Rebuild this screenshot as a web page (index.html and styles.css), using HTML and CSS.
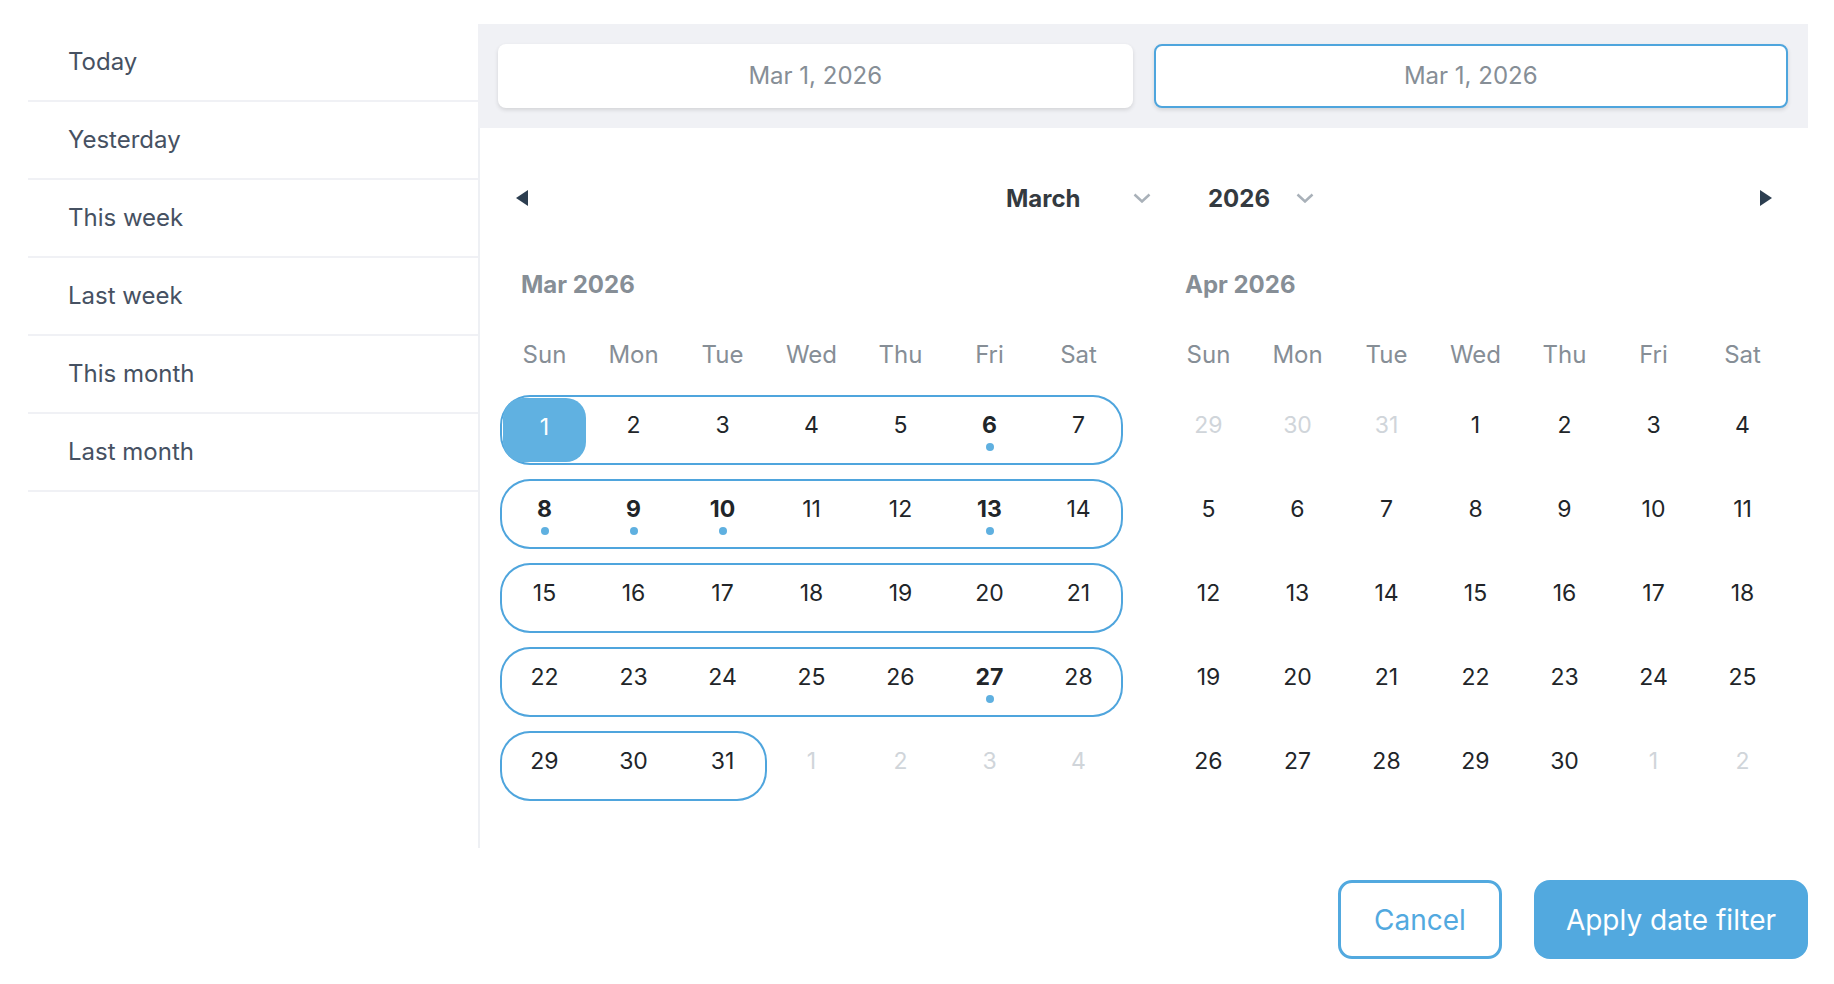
FILE: index.html
```html
<!DOCTYPE html>
<html lang="en">

<head>
    <meta charset="UTF-8">
    <meta name="viewport" content="width=device-width, initial-scale=1.0">
    <title>Date Range Filter</title>
    <link rel="stylesheet" href="styles.css">
</head>

<body>
    <div class="picker">
        <div class="main">
            <ul class="presets">
                <li>Today</li>
                <li>Yesterday</li>
                <li>This week</li>
                <li>Last week</li>
                <li>This month</li>
                <li>Last month</li>
            </ul>

            <div class="panel">
                <div class="range-inputs">
                    <div class="date-input">Mar 1, 2026</div>
                    <div class="date-input active">Mar 1, 2026</div>
                </div>

                <div class="nav">
                    <button class="nav-arrow" aria-label="Previous month">
                        <svg width="12" height="16" viewBox="0 0 12 16"><polygon points="12,0 0,8 12,16" /></svg>
                    </button>
                    <div class="selects">
                        <div class="select month-select">
                            <span>March</span>
                            <svg width="18" height="10" viewBox="0 0 18 10"><polyline points="1.5,1.5 9,8.5 16.5,1.5" /></svg>
                        </div>
                        <div class="select year-select">
                            <span>2026</span>
                            <svg width="18" height="10" viewBox="0 0 18 10"><polyline points="1.5,1.5 9,8.5 16.5,1.5" /></svg>
                        </div>
                    </div>
                    <button class="nav-arrow" aria-label="Next month">
                        <svg width="12" height="16" viewBox="0 0 12 16"><polygon points="0,0 12,8 0,16" /></svg>
                    </button>
                </div>

                <div class="months">
                    <!-- March -->
                    <div class="month">
                        <div class="month-title">Mar 2026</div>
                        <div class="weekdays">
                            <span>Sun</span><span>Mon</span><span>Tue</span><span>Wed</span><span>Thu</span><span>Fri</span><span>Sat</span>
                        </div>
                        <div class="days">
                            <div class="week">
                                <div class="range">
                                    <span class="day selected"><span>1</span></span>
                                    <span class="day">2</span>
                                    <span class="day">3</span>
                                    <span class="day">4</span>
                                    <span class="day">5</span>
                                    <span class="day marked">6</span>
                                    <span class="day">7</span>
                                </div>
                            </div>
                            <div class="week">
                                <div class="range">
                                    <span class="day marked">8</span>
                                    <span class="day marked">9</span>
                                    <span class="day marked">10</span>
                                    <span class="day">11</span>
                                    <span class="day">12</span>
                                    <span class="day marked">13</span>
                                    <span class="day">14</span>
                                </div>
                            </div>
                            <div class="week">
                                <div class="range">
                                    <span class="day">15</span>
                                    <span class="day">16</span>
                                    <span class="day">17</span>
                                    <span class="day">18</span>
                                    <span class="day">19</span>
                                    <span class="day">20</span>
                                    <span class="day">21</span>
                                </div>
                            </div>
                            <div class="week">
                                <div class="range">
                                    <span class="day">22</span>
                                    <span class="day">23</span>
                                    <span class="day">24</span>
                                    <span class="day">25</span>
                                    <span class="day">26</span>
                                    <span class="day marked">27</span>
                                    <span class="day">28</span>
                                </div>
                            </div>
                            <div class="week">
                                <div class="range">
                                    <span class="day">29</span>
                                    <span class="day">30</span>
                                    <span class="day">31</span>
                                </div>
                                <span class="day muted">1</span>
                                <span class="day muted">2</span>
                                <span class="day muted">3</span>
                                <span class="day muted">4</span>
                            </div>
                        </div>
                    </div>

                    <!-- April -->
                    <div class="month">
                        <div class="month-title">Apr 2026</div>
                        <div class="weekdays">
                            <span>Sun</span><span>Mon</span><span>Tue</span><span>Wed</span><span>Thu</span><span>Fri</span><span>Sat</span>
                        </div>
                        <div class="days">
                            <div class="week">
                                <span class="day muted">29</span>
                                <span class="day muted">30</span>
                                <span class="day muted">31</span>
                                <span class="day">1</span>
                                <span class="day">2</span>
                                <span class="day">3</span>
                                <span class="day">4</span>
                            </div>
                            <div class="week">
                                <span class="day">5</span>
                                <span class="day">6</span>
                                <span class="day">7</span>
                                <span class="day">8</span>
                                <span class="day">9</span>
                                <span class="day">10</span>
                                <span class="day">11</span>
                            </div>
                            <div class="week">
                                <span class="day">12</span>
                                <span class="day">13</span>
                                <span class="day">14</span>
                                <span class="day">15</span>
                                <span class="day">16</span>
                                <span class="day">17</span>
                                <span class="day">18</span>
                            </div>
                            <div class="week">
                                <span class="day">19</span>
                                <span class="day">20</span>
                                <span class="day">21</span>
                                <span class="day">22</span>
                                <span class="day">23</span>
                                <span class="day">24</span>
                                <span class="day">25</span>
                            </div>
                            <div class="week">
                                <span class="day">26</span>
                                <span class="day">27</span>
                                <span class="day">28</span>
                                <span class="day">29</span>
                                <span class="day">30</span>
                                <span class="day muted">1</span>
                                <span class="day muted">2</span>
                            </div>
                        </div>
                    </div>
                </div>
            </div>
        </div>

        <div class="footer">
            <button class="btn btn-cancel">Cancel</button>
            <button class="btn btn-apply">Apply date filter</button>
        </div>
    </div>
</body>

</html>
```

FILE: styles.css
```css
* {
    box-sizing: border-box;
    margin: 0;
    padding: 0;
    font-family: Inter, 'Noto Sans', sans-serif;
}

body {
    background-color: white;
}

.picker {
    padding: 24px 26px 0 28px;
}

.main {
    display: flex;
}

/* preset list on the left */
.presets {
    width: 450px;
    list-style: none;
}

.presets li {
    height: 78px;
    line-height: 76px;
    padding-left: 40px;
    border-bottom: 2px solid #f0f1f5;
    font-size: 24px;
    color: #465162;
}

/* calendar panel */
.panel {
    flex: 1;
    border-left: 2px solid #eef0f4;
}

.range-inputs {
    display: grid;
    grid-template-columns: 1fr 1fr;
    gap: 21px;
    padding: 20px;
    background-color: #f0f1f5;
    margin-left: -2px;
}

.date-input {
    height: 64px;
    line-height: 64px;
    text-align: center;
    background-color: white;
    border-radius: 8px;
    box-shadow: 0 2px 4px rgba(0, 0, 0, 0.12);
    font-size: 24px;
    color: #868e96;
}

.date-input.active {
    border: 2px solid #4ea5dd;
    line-height: 60px;
}

.nav {
    display: flex;
    align-items: center;
    height: 40px;
    margin-top: 50px;
    padding: 0 36px;
}

.nav-arrow {
    display: flex;
    background: none;
    border: none;
    cursor: pointer;
}

.nav-arrow svg {
    fill: #2c3e50;
}

.selects {
    display: flex;
    align-items: center;
    gap: 57px;
    margin: 0 auto;
    padding-left: 32px;
}

.select {
    display: flex;
    align-items: center;
    font-size: 24px;
    font-weight: 700;
    color: #343a40;
}

.select svg {
    fill: none;
    stroke: #a9b1b9;
    stroke-width: 2.5;
}

.month-select {
    width: 145px;
    justify-content: space-between;
}

.year-select {
    gap: 26px;
}

.months {
    display: grid;
    grid-template-columns: 623px 623px;
    gap: 41px;
    padding: 47px 20px 47px;
}

.month-title {
    height: 40px;
    line-height: 40px;
    padding-left: 21px;
    font-size: 24px;
    font-weight: 700;
    color: #868e96;
}

.weekdays {
    display: grid;
    grid-template-columns: repeat(7, 89px);
    margin-top: 30px;
    line-height: 40px;
    text-align: center;
    font-size: 24px;
    color: #868e96;
}

.days {
    display: flex;
    flex-direction: column;
    gap: 14px;
    margin-top: 20px;
}

.week,
.range {
    display: flex;
    height: 70px;
}

.range {
    border-radius: 30px;
    box-shadow: inset 0 0 0 2px #4fa5dd;
}

.day {
    display: flex;
    flex-direction: column;
    align-items: center;
    width: 89px;
    height: 70px;
    padding-top: 15px;
    line-height: 30px;
    font-size: 23px;
    color: #212529;
}

.day.marked {
    font-weight: 700;
}

.day.marked::after {
    content: "";
    width: 8px;
    height: 8px;
    margin-top: 3px;
    border-radius: 50%;
    background-color: #5fb0e0;
}

.day.muted {
    color: #d0d5da;
}

.day.selected {
    padding: 3px;
}

.day.selected span {
    width: 83px;
    height: 64px;
    line-height: 58px;
    text-align: center;
    border-radius: 20px;
    background-color: #60b1e1;
    color: white;
}

/* footer buttons */
.footer {
    display: flex;
    justify-content: flex-end;
    gap: 32px;
    padding-top: 32px;
}

.btn {
    height: 79px;
    font-size: 28px;
    cursor: pointer;
}

.btn-cancel {
    width: 164px;
    background-color: white;
    border: 3px solid #52a9df;
    border-radius: 14px;
    color: #52a9df;
}

.btn-apply {
    width: 274px;
    background-color: #52a9df;
    border: none;
    border-radius: 16px;
    color: white;
}
```
